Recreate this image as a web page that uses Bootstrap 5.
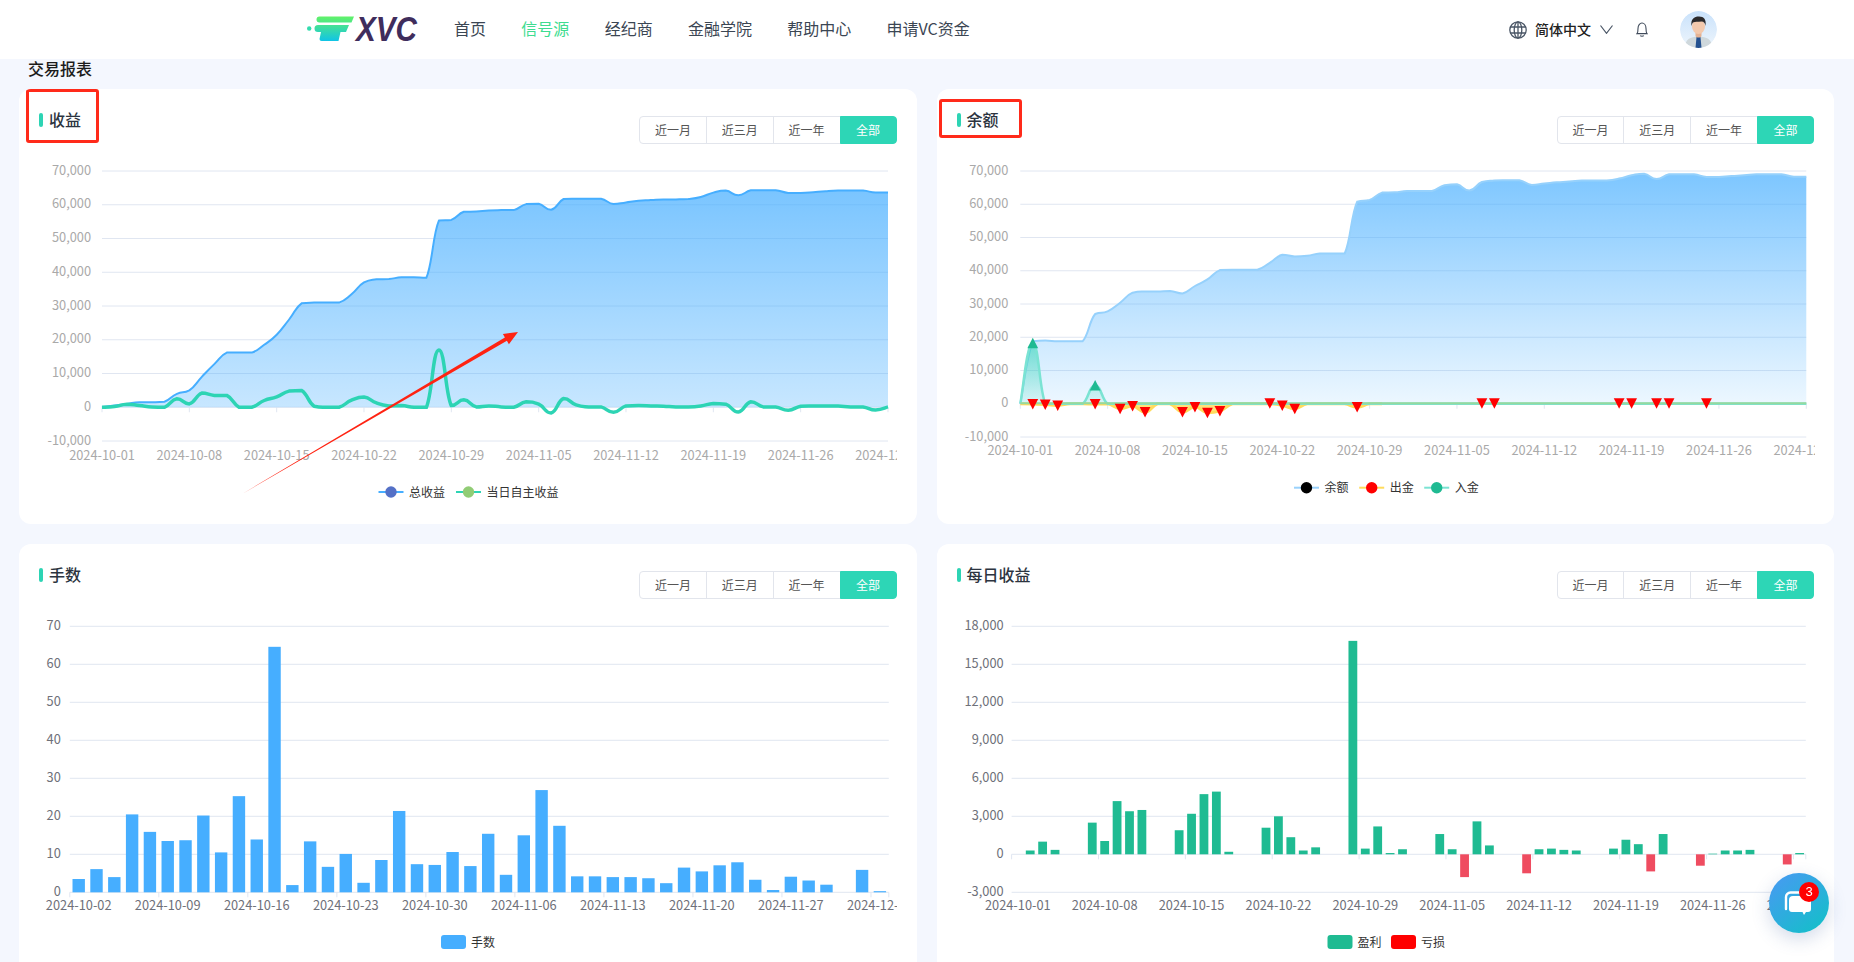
<!DOCTYPE html>
<html lang="zh-CN">
<head>
<meta charset="utf-8">
<title>交易报表</title>
<link rel="stylesheet" href="https://cdn.jsdelivr.net/npm/bootstrap@5.3.0/dist/css/bootstrap.min.css">
<style>
html,body{height:962px;overflow:hidden}
body{background:#f4f7fe;font-family:"Noto Sans CJK SC","Liberation Sans",sans-serif;color:#222}
.top-bar{height:59px;padding:0 137px 0 307px}
.logo-art{display:block;width:113px;height:26px;margin-bottom:2px}
.logo-word{font-family:"Liberation Sans",sans-serif;font-weight:700;font-style:italic;font-size:35px;fill:#3f2d5c}
.main-menu{margin-left:34px;gap:35.3px;margin-bottom:3px}
.navbar-expand .main-menu .nav-link{padding:0;font-size:16px;line-height:24px;color:#3b4653}
.navbar-expand .main-menu .nav-link.active{color:#3edc90}
.lang-text{font-size:14px;font-weight:500;color:#222;margin:0 9px 0 8px}
.bell-ico{margin:0 32px 0 23px}
.face-pic{display:block;width:37px;height:37px;border-radius:50%}
.report-wrap{padding:0 20px 0 19px}
.report-title{font-size:16px;font-weight:500;line-height:20px;margin:-1px 0 0;padding:0 0 11px 9px;color:#1c1c1c}
.report-row{--bs-gutter-x:20px;--bs-gutter-y:20px}
.chart-box{position:relative;height:435px;border:0;border-radius:12px;background:#fff;overflow:hidden}
.chart-head{height:62px;padding:27px 20px 0 20px}
.chart-name{font-size:16px;font-weight:500;line-height:1;color:#2c3440;margin:-5px 0 0;padding-left:10px;position:relative}
.chart-name::before{content:"";position:absolute;left:0;top:2px;width:4px;height:14px;border-radius:2px;background:#2dd4b4}
.range-group .btn{flex:none;width:67.8px;height:28px;padding:0;font-size:12px;line-height:26px;color:#555;background:#fff;border:1px solid #e2e5ec;border-radius:4px}
.range-group .btn.on{width:57px;color:#fff;background:#2dd6b6;border-color:#2dd6b6}
.plot-svg{display:block;width:897.5px;height:373px}
.plot-svg text{font-family:"Noto Sans CJK SC",sans-serif}
.note-frame{position:absolute;border:3px solid #ff2a1a;border-radius:3px;pointer-events:none}
.note-a{left:7px;top:0;width:73px;height:54px}
.note-b{left:2.5px;top:10px;width:83px;height:39px}
.chat-fab{position:fixed;left:1769px;top:873px;width:60px;height:60px;border-radius:50%;background:linear-gradient(140deg,#4a98f4,#10c2c6);box-shadow:0 6px 18px rgba(60,90,160,.22)}
.chat-count{position:absolute;left:30px;top:9px;width:20px;height:20px;border-radius:50%;background:#f00;color:#fff;font-size:13px;line-height:20px;text-align:center;font-family:"Liberation Sans",sans-serif}
.chat-ico{position:absolute;left:15px;top:18px}
</style>
</head>
<body>
<nav class="navbar navbar-expand bg-white top-bar flex-nowrap justify-content-start">
  <svg class="logo-art" viewBox="0 0 113 26" aria-label="FXVC">
    <defs><linearGradient id="lg" x1="0" y1="0" x2="0" y2="1"><stop offset="0" stop-color="#62f267"/><stop offset="1" stop-color="#10c4e6"/></linearGradient></defs>
    <circle cx="2.200" cy="12.500" r="2.200" fill="#33dcae"/>
    <path fill="url(#lg)" d="M12.500 0.500H47L44.500 6.500H12.500A3 3 0 0 1 12.500 0.500ZM11 9H42L39 16H33.500L31.500 25H14.500A2 2 0 0 1 12.500 23L14 16H11A3.500 3.500 0 0 1 11 9Z"/>
    <text class="logo-word" x="49" y="25" textLength="61" lengthAdjust="spacingAndGlyphs">XVC</text>
  </svg>
  <ul class="navbar-nav main-menu flex-row">
    <li class="nav-item"><a class="nav-link" href="#">首页</a></li>
    <li class="nav-item"><a class="nav-link active" href="#">信号源</a></li>
    <li class="nav-item"><a class="nav-link" href="#">经纪商</a></li>
    <li class="nav-item"><a class="nav-link" href="#">金融学院</a></li>
    <li class="nav-item"><a class="nav-link" href="#">帮助中心</a></li>
    <li class="nav-item"><a class="nav-link" href="#">申请VC资金</a></li>
  </ul>
  <div class="d-flex align-items-center ms-auto">
    <svg width="18" height="18" viewBox="0 0 18 18" fill="none" stroke="#4a5666" stroke-width="1.3"><circle cx="9" cy="9" r="8.200"/><ellipse cx="9" cy="9" rx="3.800" ry="8.200"/><path d="M9 .8V17.200M1.400 6H16.600M1.400 12H16.600"/></svg>
    <span class="lang-text">简体中文</span>
    <svg width="13" height="9" viewBox="0 0 13 9" fill="none" stroke="#4a5666" stroke-width="1.200"><path d="M.5 .5L6.500 8.300L12.500 .5"/></svg>
    <svg class="bell-ico" width="12" height="15" viewBox="0 0 12 15" fill="none" stroke="#3f4a5a" stroke-width="1.100"><path d="M1 11.600C2 10.400 2 9.500 2 6.500C2 3.300 3.800 1 6 1S10 3.300 10 6.500C10 9.500 10 10.400 11 11.600Z"/><path d="M4.200 13.600C5 14.400 7 14.400 7.800 13.600"/></svg>
    <svg class="face-pic" viewBox="0 0 37 37">
      <defs><linearGradient id="av" x1="0" y1="0" x2="0" y2="1"><stop offset="0" stop-color="#c9e2fb"/><stop offset="1" stop-color="#eef5fc"/></linearGradient></defs>
      <circle cx="18.500" cy="18.500" r="18.500" fill="url(#av)"/>
      <path d="M5 37C5 28 10 26 18.500 25.500C27 26 32 28 32 37Z" fill="#cfd8dc"/>
      <path d="M16.500 26H20.500L21.500 37H15.500Z" fill="#24508f"/>
      <rect x="15.500" y="20" width="6" height="6.500" rx="2" fill="#e5b394"/>
      <ellipse cx="18.500" cy="15.500" rx="6.500" ry="7.500" fill="#f3c9ad"/>
      <path d="M11.500 15C10.500 8 14 5.500 19 5.500C24 5.500 26.500 8.500 25.500 15C25 12 24 10.500 21.500 10.500C18 11 15 10.500 13 11.500C12 12.500 12 14 11.500 15Z" fill="#2b2a2c"/>
    </svg>
  </div>
</nav>

<main class="report-wrap">
  <h1 class="report-title">交易报表</h1>
  <div class="row report-row">
    <div class="col-6"><section class="card chart-box" data-chart="c1"></section></div>
    <div class="col-6"><section class="card chart-box" data-chart="c2"></section></div>
    <div class="col-6"><section class="card chart-box" data-chart="c3"></section></div>
    <div class="col-6"><section class="card chart-box" data-chart="c4"></section></div>
  </div>
</main>

<div class="chat-fab">
  <svg class="chat-ico" width="30" height="26" viewBox="0 0 30 26"><path d="M2 18V6A4.500 4.500 0 0 1 6.500 1.500H22" fill="none" stroke="#fff" stroke-width="2.400" stroke-linecap="round"/><path d="M9 5H24A3 3 0 0 1 27 8V18A3 3 0 0 1 24 21H22L20 24L18.500 21H8A3 3 0 0 1 5 18V9A4 4 0 0 1 9 5Z" fill="#fff"/></svg>
  <span class="chat-count">3</span>
</div>

<script>
const total=[0,500,1000,1500,1500,1600,4000,5000,9000,12800,16200,16200,16200,18500,21500,26000,30800,31000,31000,31000,33500,37000,37900,38000,38500,38500,38400,55300,55500,57900,58000,58300,58400,58400,60200,60300,58500,61700,61800,61800,61800,60200,60700,61200,61400,61600,61600,61700,62300,63600,64200,62800,64300,64300,64300,63500,63500,63700,64000,64200,64200,64200,63600,63600];
const self=[0,200,900,500,100,0,2500,1000,4200,3500,3500,0,0,2000,3100,4800,5000,300,0,0,2100,3000,1300,400,500,0,0,17000,500,2200,100,400,100,0,1600,900,-1700,2600,700,100,100,-1500,400,500,400,300,100,100,400,1100,900,-1400,1600,100,100,-900,300,400,400,400,100,100,-800,100];
const bal=[0,18800,19000,18800,18800,18800,27000,27800,30400,33400,33800,33800,33900,33200,35400,37400,40200,40300,40300,40300,42400,44800,44300,44500,45200,45200,45200,60800,61300,63500,63600,64000,64000,64000,65700,66000,64100,66700,67100,67200,67200,65800,66200,66600,66800,67100,67100,67100,67700,68700,69200,67600,69000,69000,69000,68200,68200,68500,68700,69000,69000,69000,68300,68300];
const inflow=bal.map(()=>0);inflow[1]=18200;inflow[6]=5500;
const outflow=bal.map(()=>0);Object.entries({1:-100,2:-200,3:-500,6:-100,8:-1500,9:-700,10:-2500,13:-2500,14:-1000,15:-2700,16:-2200,21:-500,22:-1500,27:-1000}).forEach(([k,v])=>outflow[k]=v);
const lots=[3.5,6.1,4,20.5,15.9,13.5,13.7,20.2,10.5,25.3,13.9,64.6,1.9,13.4,6.7,10.1,2.5,8.5,21.4,7.4,7.2,10.6,6.9,15.4,4.6,15,26.9,17.5,4.2,4.2,4,4,3.7,2.4,6.5,5.5,7.1,7.9,3.3,.6,4.1,3.1,2,0,5.9,.3];
const daily=bal.map(()=>0);Object.entries({1:300,2:1000,3:350,6:2500,7:1050,8:4200,9:3400,10:3500,13:1900,14:3200,15:4750,16:4950,17:200,20:2100,21:3000,22:1350,23:300,24:550,27:16850,28:450,29:2200,30:100,31:400,34:1600,35:400,36:-1800,37:2600,38:700,41:-1500,42:400,43:450,44:350,45:300,48:450,49:1150,50:800,51:-1350,52:1600,55:-900,56:50,57:300,58:300,59:350,62:-800,63:100}).forEach(([k,v])=>daily[k]=v);

const fmt=v=>v.toLocaleString('en-US');
function dateLabel(start,n){const d=new Date(Date.UTC(2024,9,start+n));return d.toISOString().slice(0,10)}
function spline(pts){
  const c=(v,a,b)=>Math.min(Math.max(v,Math.min(a,b)),Math.max(a,b));
  let s='M'+pts[0].join(' ');
  for(let i=0;i<pts.length-1;i++){
    const p0=pts[Math.max(i-1,0)],p1=pts[i],p2=pts[i+1],p3=pts[Math.min(i+2,pts.length-1)];
    const cx1=p1[0]+(p2[0]-p0[0])*.25,cy1=c(p1[1]+(p2[1]-p0[1])*.25,p1[1],p2[1]);
    const cx2=p2[0]-(p3[0]-p1[0])*.25,cy2=c(p2[1]-(p3[1]-p1[1])*.25,p1[1],p2[1]);
    s+=`C${cx1.toFixed(1)} ${cy1.toFixed(1)} ${cx2.toFixed(1)} ${cy2.toFixed(1)} ${p2[0].toFixed(1)} ${p2[1].toFixed(1)}`;
  }
  return s;
}
function axes(o){
  let s='';
  const n=(o.max-o.min)/o.step;
  for(let i=0;i<=n;i++){
    const v=o.max-i*o.step,y=o.y(v);
    s+=`<line x1="${o.l}" x2="${o.r}" y1="${y}" y2="${y}" stroke="#e0e6f1"/>`;
    s+=`<text x="${o.l-o.lm}" y="${y+3.500}" text-anchor="end" font-size="${o.fs}" fill="${o.lc}">${fmt(v)}</text>`;
  }
  return s;
}
function xaxis(o){
  let s='',zero=o.y(0);
  o.ticks.forEach(x=>s+=`<line x1="${x}" x2="${x}" y1="${zero}" y2="${zero+5}" stroke="#e0e6f1"/>`);
  s+=`<g clip-path="url(#${o.id}c)">`;
  o.labels.forEach(([x,t])=>s+=`<text x="${x}" y="${o.ly}" text-anchor="middle" font-size="${o.fs}" fill="${o.lc}">${t}</text>`);
  s+='</g>'+`<clipPath id="${o.id}c"><rect x="0" y="0" width="878" height="373"/></clipPath>`;
  return s;
}
function legendLine(x,y,line,dot,t){
  return `<line x1="${x}" x2="${x+25}" y1="${y}" y2="${y}" stroke="${line}" stroke-width="2"/><circle cx="${x+12.500}" cy="${y}" r="5.700" fill="${dot}"/><text x="${x+30.500}" y="${y+4.500}" font-size="12" fill="#333">${t}</text>`;
}
function legendBox(x,y,c,t){
  return `<rect x="${x}" y="${y-7}" width="25" height="14" rx="3" fill="${c}"/><text x="${x+30}" y="${y+4.500}" font-size="12" fill="#333">${t}</text>`;
}
const grad=(id,c,a,b)=>`<linearGradient id="${id}" x1="0" y1="0" x2="0" y2="1"><stop offset="0" stop-color="${c}" stop-opacity="${a}"/><stop offset="1" stop-color="${c}" stop-opacity="${b}"/></linearGradient>`;

const charts={
 c1(){
  const o={id:'c1',l:83,r:869,max:70000,min:-10000,step:10000,fs:12.8,lc:'#a9a9a9',lm:11,y:v=>20+(70000-v)*.003375};
  const X=d=>o.l+d*12.476;
  const t=total.map((v,i)=>[X(i),o.y(v)]),g=self.map((v,i)=>[X(i),o.y(v)]);
  const ticks=[],labels=[];for(let d=0;d<=63;d+=7){ticks.push(X(d));labels.push([X(d),dateLabel(1,d)])}
  return `<defs>${grad('a1','#46aeff',.72,.3)}</defs>`+axes(o)+xaxis({...o,ticks,labels,ly:308.500})+
   `<path d="${spline(t)}L${X(63)} ${o.y(0)}L${X(0)} ${o.y(0)}Z" fill="url(#a1)"/>`+
   `<path d="${spline(t)}" fill="none" stroke="#46aeff" stroke-width="2"/>`+
   `<path d="${spline(g)}" fill="none" stroke="#2dd4b4" stroke-width="3.500"/>`+
   legendLine(359.500,341,'#46aeff','#5470c6','总收益')+legendLine(437,341,'#2dd4b4','#91cc75','当日自主收益')+
   `<polygon fill="#ff2312" points="223,343 487.900,189.800 489.900,193.300 499,181 483.900,182.900 485.900,186.400"/>`;
 },
 c2(){
  const o={id:'c2',l:83.300,r:869.300,max:70000,min:-10000,step:10000,fs:12.8,lc:'#a9a9a9',lm:12,y:v=>20+(70000-v)*.003325};
  const X=d=>o.l+d*12.476;
  const P=a=>a.map((v,i)=>[X(i),o.y(v)]);
  const zero=o.y(0);
  const ticks=[],labels=[];for(let d=0;d<=63;d+=7){ticks.push(X(d));labels.push([X(d),dateLabel(1,d)])}
  let m='';
  [1,2,3,6,8,9,10,13,14,15,16,20,21,22,27,37,38,48,49,51,52,55].forEach(d=>{const y=o.y(outflow[d]||0)+(d>=37||d==20?-.500:0);m+=`<polygon points="${X(d)-5.400},${y-5} ${X(d)+5.400},${y-5} ${X(d)},${y+5.500}" fill="#f00"/>`});
  [1,6].forEach(d=>{const y=o.y(inflow[d]);m+=`<polygon points="${X(d)-5.400},${y+5} ${X(d)+5.400},${y+5} ${X(d)},${y-5.500}" fill="#1fba92"/>`});
  const close=`L${X(63)} ${zero}L${X(0)} ${zero}Z`;
  return `<defs>${grad('a2','#46aeff',.7,.1)}${grad('a3','#2dd4b4',.6,.1)}</defs>`+axes(o)+xaxis({...o,ticks,labels,ly:303.500})+
   `<path d="${spline(P(bal))}${close}" fill="url(#a2)"/>`+
   `<path d="${spline(P(bal))}" fill="none" stroke="#96d1fc" stroke-width="2"/>`+
   `<path d="${spline(P(inflow))}${close}" fill="url(#a3)"/>`+
   `<path d="${spline(P(outflow))}${close}" fill="#ffe27a"/>`+
   `<path d="${spline(P(outflow).slice(0,30))}" fill="none" stroke="#ffdb5c" stroke-width="3"/>`+
   `<path d="${spline(P(inflow))}" fill="none" stroke="#7be3d3" stroke-width="2.500"/>`+
   `<line x1="${X(0)}" x2="${X(63)}" y1="${zero-.5}" y2="${zero-.5}" stroke="#95d99f" stroke-width="2"/>`+m+
   legendLine(357,336.700,'#9ad2fc','#000','余额')+legendLine(422.200,336.700,'#ffdb5c','#f00','出金')+legendLine(487.200,336.700,'#7be3d3','#1fba92','入金');
 },
 c3(){
  const o={id:'c3',l:50.800,r:869.800,max:70,min:0,step:10,fs:12.8,lc:'#6e7079',lm:9,y:v=>20.300+(70-v)*3.8};
  const B=i=>o.l+(i+.5)*17.804;
  let b='';lots.forEach((v,i)=>{if(v)b+=`<rect x="${B(i)-6.200}" y="${o.y(v)}" width="12.400" height="${o.y(0)-o.y(v)}" fill="#46aeff"/>`});
  const ticks=[o.r],labels=[];for(let i=0;i<46;i+=5){ticks.push(B(i)-8.900);labels.push([B(i),dateLabel(2,i/5*7)])}
  return axes(o)+xaxis({...o,ticks,labels,ly:303.500})+b+legendBox(422,336,'#46aeff','手数');
 },
 c4(){
  const o={id:'c4',l:74.600,r:868.800,max:18000,min:-3000,step:3000,fs:12.8,lc:'#6e7079',lm:8,y:v=>20.300+(18000-v)*.012667};
  const B=i=>o.l+(i+.5)*12.41;
  let b='';daily.forEach((v,i)=>{if(!v)return;const y=Math.min(o.y(v),o.y(0)),h=Math.abs(o.y(v)-o.y(0));b+=`<rect x="${B(i)-4.400}" y="${y}" width="8.800" height="${h}" fill="${v>0?'#1fbb92':'#ef4c60'}"/>`});
  const ticks=[o.r],labels=[];for(let d=0;d<=63;d+=7){ticks.push(B(d)-6.200);labels.push([B(d),dateLabel(1,d)])}
  return axes(o)+xaxis({...o,ticks,labels,ly:303.500})+b+legendBox(390.500,336,'#1fbb92','盈利')+legendBox(454,336,'#f00','亏损');
 }
};
const meta={c1:['收益','note-a'],c2:['余额','note-b'],c3:['手数',''],c4:['每日收益','']};
document.querySelectorAll('[data-chart]').forEach(box=>{
  const k=box.dataset.chart,[name,note]=meta[k];
  box.innerHTML=`<div class="chart-head d-flex justify-content-between align-items-start">
    <h2 class="chart-name">${name}</h2>
    <div class="btn-group range-group" role="group">
      <button type="button" class="btn">近一月</button><button type="button" class="btn">近三月</button><button type="button" class="btn">近一年</button><button type="button" class="btn on">全部</button>
    </div></div>
    <svg class="plot-svg" viewBox="0 0 897.500 373">${charts[k]()}</svg>`+(note?`<div class="note-frame ${note}"></div>`:'');
});
</script>
<script src="https://cdn.jsdelivr.net/npm/bootstrap@5.3.0/dist/js/bootstrap.bundle.min.js"></script>
</body>
</html>
